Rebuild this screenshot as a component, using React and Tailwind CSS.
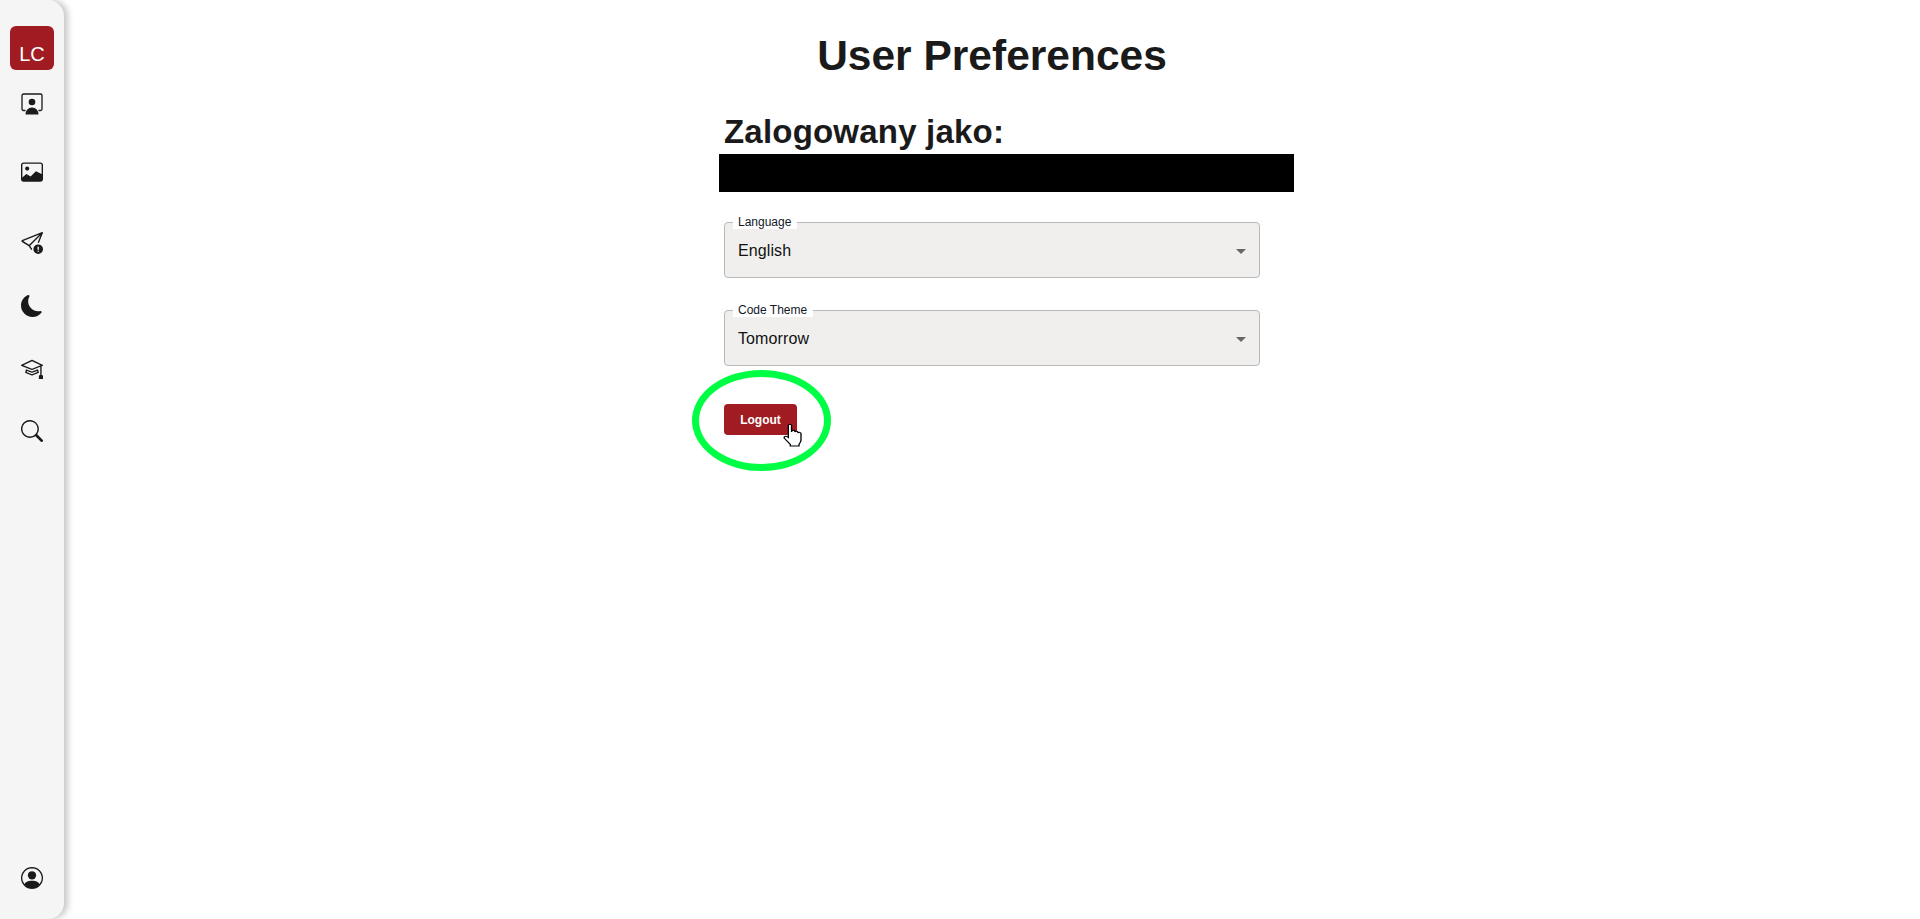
import { BsImage, BsSendExclamation, BsMoonFill, BsMortarboard, BsSearch, BsPersonCircle } from 'react-icons/bs';

// framed person, no matching icon in the packages
const FramedPerson = ({ size }) => (
  <svg width={size} height={size} viewBox="0 0 22 22" fill="#1a1a1a">
    <path
      d="M4.500 17.500H2.500A1.500 1.500 0 0 1 1 16V2.500A1.500 1.500 0 0 1 2.500 1H19.500A1.500 1.500 0 0 1 21 2.500V16A1.500 1.500 0 0 1 19.500 17.500H17.500"
      fill="none"
      stroke="#1a1a1a"
      strokeWidth="1.300"
    />
    <circle cx="11" cy="9" r="3.300" />
    <path d="M4.500 21.500c0-4 2.800-7 6.500-7s6.500 3 6.500 7Z" />
  </svg>
);

const navIcons = [
  { Icon: FramedPerson, cls: 'mt-[23px]' },
  { Icon: BsImage, cls: 'mt-[46px]' },
  { Icon: BsSendExclamation, cls: 'mt-[49px]' },
  { Icon: BsMoonFill, cls: 'mt-[41px]' },
  { Icon: BsMortarboard, cls: 'mt-[40px]' },
  { Icon: BsSearch, cls: 'mt-[41px]' },
];

const SelectField = ({ label, value }) => (
  <div className="relative w-[536px] h-[56px] rounded bg-[#f0efee] border border-[#b8b8b8]">
    <span className="absolute left-[8px] -top-[8px] bg-white pl-[5px] pr-[6px] text-[12px] leading-[14px] text-[#111827]">
      {label}
    </span>
    <span className="absolute left-[13px] top-[16px] text-[16px] leading-[23px] tracking-[0.1px] text-[#111111]">{value}</span>
    <span className="absolute right-[13px] top-[26px] w-0 h-0 border-x-[5px] border-x-transparent border-t-[5px] border-t-[#666666]" />
  </div>
);

export default function App() {
  return (
    <div className="flex h-[919px] bg-white font-['Liberation_Sans',Arial,sans-serif] text-[#1a1a1a] overflow-hidden">
      <aside className="flex flex-col items-center justify-between w-[64px] h-full shrink-0 bg-[#f5f5f5] rounded-r-2xl shadow-[4px_0_6px_rgba(0,0,0,0.22)]">
        <div className="flex flex-col items-center pt-[26px]">
          <div className="flex items-end justify-center w-[44px] h-[44px] rounded-md bg-[#a01c22] text-white text-[20px] leading-[32px]">
            LC
          </div>
          {navIcons.map(({ Icon, cls }, i) => (
            <div key={i} className={`flex items-center justify-center h-[22px] ${cls}`}>
              <Icon size={22} />
            </div>
          ))}
        </div>
        <div className="pb-[30px]">
          <BsPersonCircle size={22} />
        </div>
      </aside>

      <main className="flex flex-col items-center flex-1">
        <h1 className="mt-[30px] text-[42.5px] leading-[52px] font-bold">User Preferences</h1>
        <div className="flex flex-col w-[536px] mt-[27px]">
          <h2 className="text-[33px] leading-[45px] tracking-[0.2px] font-bold">Zalogowany jako:</h2>
          <div className="-ml-[5px] w-[575px] h-[38px] bg-black" />
          <div className="mt-[30px]">
            <SelectField label="Language" value="English" />
          </div>
          <div className="mt-[32px]">
            <SelectField label="Code Theme" value="Tomorrow" />
          </div>
          <div className="relative mt-[38px] w-[73px] h-[31px]">
            <button className="w-full h-full rounded bg-[#a01c22] text-white text-[12px] font-bold">Logout</button>
            <div className="absolute -left-[32px] -top-[34px] w-[139px] h-[101px] rounded-[50%] border-[7px] border-[#00ff44]" />
            <svg className="absolute left-[59px] top-[19px]" width="20" height="24" viewBox="0 0 15 24" preserveAspectRatio="none">
              <path
                d="M4 2.500c0-1.600 2.400-1.600 2.400 0V9l.2-1c.5-1 2-1 2.300 0v1c.4-1 2-1 2.300.2v.8c.5-1 2.200-.8 2.300.5V17c0 2-1 3-1.500 4.500v1.500H5.500v-1.500L1.200 15.500c-1-1.500.5-3 2-1.800L4 14.500Z"
                fill="#ffffff"
                stroke="#000000"
                strokeWidth="1"
              />
            </svg>
          </div>
        </div>
      </main>
    </div>
  );
}
